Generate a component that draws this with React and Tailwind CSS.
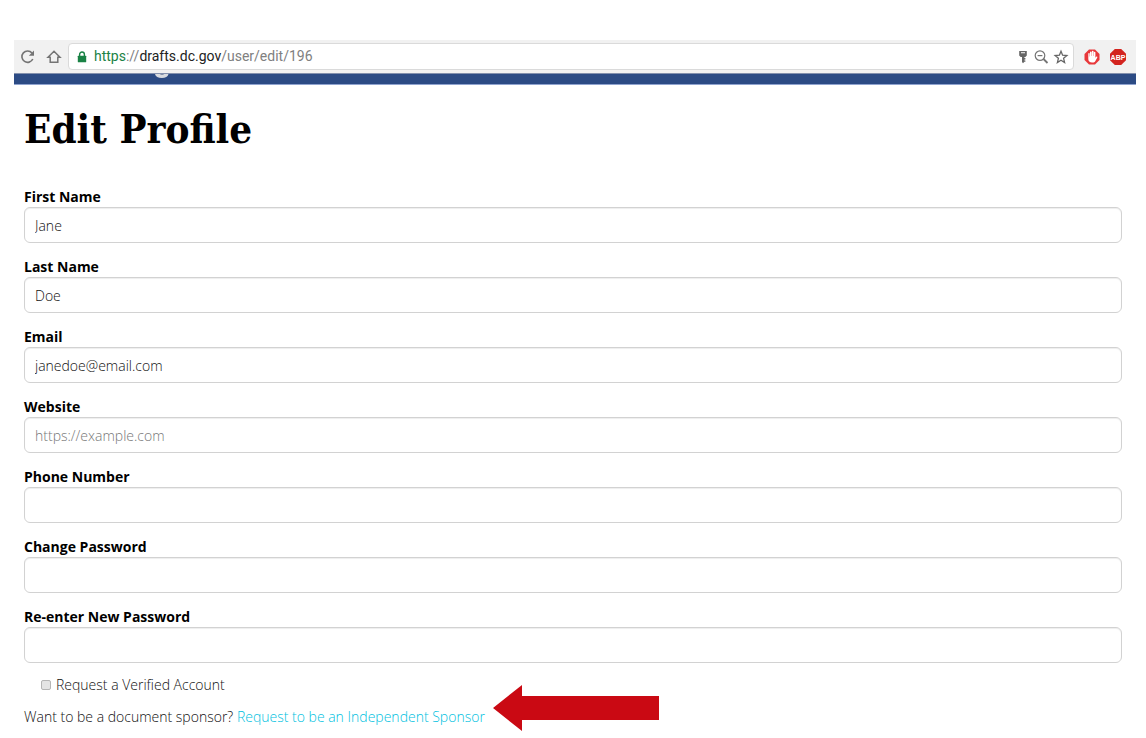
import React from "react";

const fields = [
  { id: "first-name", label: "First Name", type: "text", value: "Jane" },
  { id: "last-name", label: "Last Name", type: "text", value: "Doe" },
  { id: "email", label: "Email", type: "email", value: "janedoe@email.com" },
  { id: "website", label: "Website", type: "url", placeholder: "https://example.com" },
  { id: "phone", label: "Phone Number", type: "tel" },
  { id: "password", label: "Change Password", type: "password" },
  { id: "password-confirm", label: "Re-enter New Password", type: "password" },
];

function ReloadIcon() {
  return (
    <svg className="size-4" viewBox="0 0 16 16" fill="none" stroke="#747474" strokeWidth="1.6">
      <path d="M12.8 10A5.7 5.7 0 1 1 12 4" />
      <path d="M14 1.6v5.2H8.8z" fill="#747474" stroke="none" />
    </svg>
  );
}

function HomeIcon() {
  return (
    <svg className="size-4" viewBox="0 0 16 16" fill="none" stroke="#747474" strokeWidth="1.5">
      <path d="M2 8.2L8 2.2l6 6h-2.2v5H4.2v-5z" />
    </svg>
  );
}

function LockIcon() {
  return (
    <svg className="h-3 w-2.5" viewBox="0 0 10 12">
      <path d="M2.6 5V3.4a2.4 2.4 0 0 1 4.8 0V5" fill="none" stroke="#1a8245" strokeWidth="1.4" />
      <rect x="0.8" y="4.7" width="8.4" height="6.6" rx="0.6" fill="#1a8245" />
    </svg>
  );
}

function KeyIcon() {
  return (
    <svg className="h-4 w-3" viewBox="0 0 12 16" fill="#666">
      <path fillRule="evenodd" d="M2.2 2h7.6v4.4L8.3 8H7.4v1h1v1.4h-1v1h1v1.4h-1L6 14.2 5 13V8H3.7L2.2 6.4zM4 3.2v1h4v-1z" />
    </svg>
  );
}

function ZoomOutIcon() {
  return (
    <svg className="size-4" viewBox="0 0 16 16" fill="none" stroke="#747474" strokeWidth="1.2">
      <circle cx="7" cy="6.6" r="4.8" />
      <path d="M4.6 6.6h4.8" />
      <path d="M10.5 10l4 4" strokeWidth="1.8" />
    </svg>
  );
}

function StarIcon() {
  return (
    <svg className="size-4" viewBox="0 0 16 16" fill="none" stroke="#666" strokeWidth="1.3">
      <path d="M8 2.2l1.6 4 4.3.3-3.3 2.8 1 4.2L8 11.2l-3.6 2.3 1-4.2L2.1 6.5l4.3-.3z" />
    </svg>
  );
}

function HandIcon() {
  return (
    <svg className="size-4" viewBox="0 0 16 16">
      <path d="M5 .5h6L15.5 5v6L11 15.5H5L.5 11V5z" fill="#e8383b" />
      <path d="M4.3 8V4.8a.7.7 0 0 1 1.4 0V7.4h.3V3.2a.8.8 0 0 1 1.6 0V7h.3V2.7a.85.85 0 0 1 1.7 0V7h.3V3.6a.75.75 0 0 1 1.5 0v5.2l.8-1c.6-.6 1.4-.1 1.1.6l-1.900 3.500c-.6 1.200-1.500 1.700-2.900 1.700H8c-2.300 0-3.700-1.500-3.700-3.600z" fill="#fff" />
    </svg>
  );
}

function AdblockIcon() {
  return (
    <svg className="size-4" viewBox="0 0 16 16">
      <path d="M4.8 0h6.4L16 4.8v6.4L11.2 16H4.8L0 11.2V4.8z" fill="#d3241f" />
      <text x="8" y="10.6" textAnchor="middle" fontSize="7" fill="#fff" className="font-['Liberation_Sans',sans-serif] font-bold">ABP</text>
    </svg>
  );
}

function BrowserBar() {
  return (
    <div className="flex h-[33px] items-center bg-[#f1f1f1] pr-2.5 pl-1.5">
      <button type="button" aria-label="Reload"><ReloadIcon /></button>
      <button type="button" aria-label="Home" className="ml-2.5"><HomeIcon /></button>
      <div className="ml-1.5 flex h-[27px] flex-1 items-center rounded border border-[#dadada] bg-white pr-1 pl-2">
        <LockIcon />
        <div className="ml-[7px] flex-1 font-[Roboto,sans-serif] text-[14px] text-[#808080]">
          <span className="text-[#1a8245]">https</span>://<span className="text-[#222]">drafts.dc.gov</span>/user/edit/196
        </div>
        <div className="flex items-center gap-1">
          <button type="button" aria-label="Saved passwords"><KeyIcon /></button>
          <button type="button" aria-label="Zoom"><ZoomOutIcon /></button>
          <button type="button" aria-label="Bookmark this page"><StarIcon /></button>
        </div>
      </div>
      <button type="button" aria-label="Content blocker" className="ml-2.5"><HandIcon /></button>
      <button type="button" aria-label="Adblock Plus" className="ml-2.5"><AdblockIcon /></button>
    </div>
  );
}

function Field({ id, label, type, value, placeholder }) {
  return (
    <div>
      <label htmlFor={id} className="block text-[14px] leading-5 font-bold text-black">{label}</label>
      <input
        id={id}
        type={type}
        defaultValue={value}
        placeholder={placeholder}
        className="block h-9 w-full rounded-md border border-[#d2d2d2] bg-white px-2.5 text-[14px] font-light text-[#111] shadow-[inset_0_1px_1px_#eeeeee] placeholder:text-[#777]"
      />
    </div>
  );
}

export default function App() {
  return (
    <div className="bg-white pt-10 pr-2.5 pb-2 pl-3.5 font-['Open_Sans','Noto_Sans',sans-serif]">
      <BrowserBar />
      <div className="h-3 overflow-hidden border-t border-b border-t-[#8390ad] border-b-[#8fa3cf] bg-[#2c4b84]">
        <svg className="ml-[141px] h-1 w-3.5" viewBox="0 0 14 4">
          <path d="M0 0h13.5C13 2.7 10.5 4 6.8 4S.5 2.7 0 0z" fill="#d8dbe0" />
          <path d="M5 0h4l-.8 1H5.8z" fill="#8592ab" />
        </svg>
      </div>
      <main className="pr-3.5 pl-2.5">
        <h1 className="pt-4 font-['DejaVu_Serif_Condensed','DejaVu_Serif',serif] text-[40px] leading-[56px] font-bold text-black">Edit Profile</h1>
        <form className="pt-[30px]">
          <div className="flex flex-col gap-3.5">
            {fields.map((field) => (
              <Field key={field.id} {...field} />
            ))}
          </div>
          <div className="mt-3 flex items-center gap-[5px] pl-[17px] text-[14px] leading-5 font-light text-[#111]">
            <input
              id="verified"
              type="checkbox"
              className="size-2.5 appearance-none rounded-xs border border-[#b5b5b5] bg-[#e4e4e4] checked:bg-[#4a80d8]"
            />
            <label htmlFor="verified">Request a Verified Account</label>
          </div>
          <div className="relative mt-3 inline-block">
            <p className="text-[14px] leading-5 font-light text-[#111]">
              Want to be a document sponsor?{" "}
              <a href="#sponsor" className="text-[#00bfe0]">Request to be an Independent Sponsor</a>
            </p>
            <svg className="absolute -bottom-1 left-full ml-2 h-[46px] w-[166px]" viewBox="0 0 166 46">
              <path d="M0 23L29 0v11h137v24H29v11z" fill="#ca0913" />
            </svg>
          </div>
        </form>
      </main>
    </div>
  );
}
